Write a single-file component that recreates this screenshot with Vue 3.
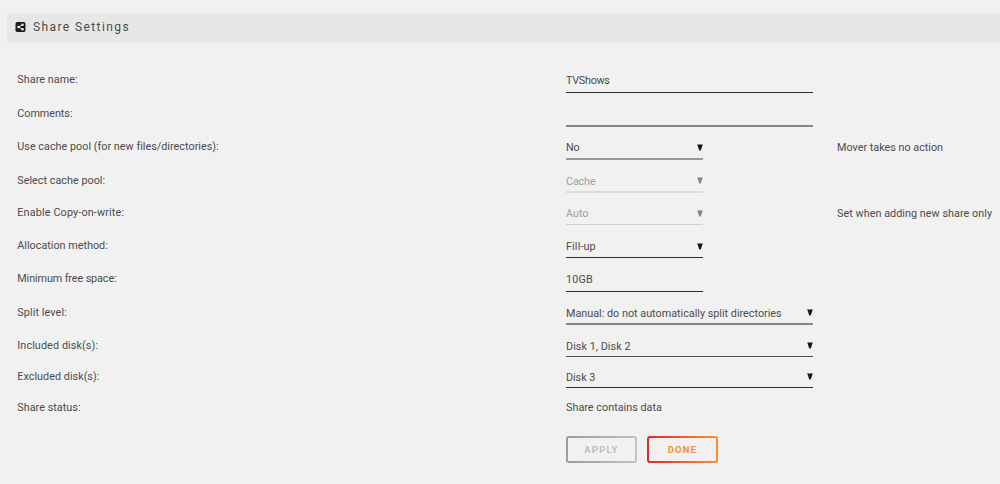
<script setup>
const rows = [
  { label: 'Share name:', ls: 0.05, height: 34, line: 30, kind: 'input', value: 'TVShows', vs: -0.28, wide: true },
  { label: 'Comments:', ls: -0.04, height: 34, line: 30, kind: 'input', value: '', wide: true, tone: 'mid' },
  { label: 'Use cache pool (for new files/directories):', ls: 0.02, height: 33, line: 29, kind: 'select', value: 'No', vs: -0.3, note: 'Mover takes no action', tone: 'soft', raised: true },
  { label: 'Select cache pool:', ls: 0.02, height: 33, line: 29, kind: 'select', value: 'Cache', vs: -0.15, tone: 'disabled blurred' },
  { label: 'Enable Copy-on-write:', ls: 0.15, height: 33, line: 28, kind: 'select', value: 'Auto', note: 'Set when adding new share only', ns: 0.04, tone: 'disabled', raised: true },
  { label: 'Allocation method:', height: 33, line: 28, kind: 'select', value: 'Fill-up', vs: 0.14, raised: true },
  { label: 'Minimum free space:', ls: -0.1, height: 33, line: 29, kind: 'input', value: '10GB', vs: 0.2, raised: true },
  { label: 'Split level:', ls: 0.1, height: 33, line: 29, kind: 'select', value: 'Manual: do not automatically split directories', wide: true, tone: 'mid' },
  { label: 'Included disk(s):', ls: 0.1, height: 31, line: 28, kind: 'select', value: 'Disk 1, Disk 2', vs: 0.05, wide: true, tone: 'dim' },
  { label: 'Excluded disk(s):', ls: 0.03, height: 31, line: 28, kind: 'select', value: 'Disk 3', vs: -0.05, wide: true },
  { label: 'Share status:', ls: 0.03, height: 31, line: 28, kind: 'text', value: 'Share contains data', vs: 0.02 },
]
const tracking = (n = 0) => ({ letterSpacing: n + 'px' })
</script>

<template>
  <main class="page">
    <header class="title">
      <svg class="share" viewBox="0 0 20 20" aria-hidden="true">
        <rect width="20" height="20" rx="3.5" fill="#1c1c1c" />
        <path d="M14 5.5 6 10l8 4.5" fill="none" stroke="#eee" stroke-width="1.8" />
        <circle cx="14" cy="5.7" r="2.5" fill="#eee" />
        <circle cx="6" cy="10" r="2.5" fill="#eee" />
        <circle cx="14" cy="14.3" r="2.5" fill="#eee" />
      </svg>
      <h1>Share Settings</h1>
    </header>
    <section class="form">
      <div v-for="row in rows" :key="row.label" class="row" :class="{ raised: row.raised }" :style="{ height: row.height + 'px' }">
        <span class="label" :style="tracking(row.ls)">{{ row.label }}</span>
        <div class="field" :class="[row.kind, row.tone, { wide: row.wide }]" :style="{ height: row.line + 'px' }">
          <span :style="tracking(row.vs)">{{ row.value }}</span>
          <svg v-if="row.kind === 'select'" class="arrow" viewBox="0 0 6 7"><path d="M0.2 0.5h5.6L3.7 6.5H2.3z" /></svg>
        </div>
        <span class="note" :style="tracking(row.ns)">{{ row.note }}</span>
      </div>
    </section>
    <footer class="actions">
      <button class="apply" disabled>APPLY</button>
      <button class="done">DONE</button>
    </footer>
  </main>
</template>

<style>
body { background: #f1f1f1; }
</style>

<style scoped>
.page {
  box-sizing: border-box;
  width: 1000px;
  height: 484px;
  padding-top: 13px;
  overflow: hidden;
  background: #f1f1f1;
  color: #4b4b4b;
  font: 10.8px/16px Roboto, "Liberation Sans", sans-serif;
}
.title {
  display: flex;
  align-items: center;
  box-sizing: border-box;
  height: 30px;
  margin-left: 7px;
  padding: 0 0 2px 8px;
  background: #e7e7e7;
}
.share { width: 11px; height: 10px; margin-right: 7px; }
h1 { margin: 0; font-size: 12px; font-weight: 400; letter-spacing: 1.4px; }
.form { padding: 20px 0 0 17px; }
.row { display: grid; grid-template-columns: 549px 271px 1fr; align-items: start; }
.label { padding: 9px 0 0 0.3px; }
.note { padding-top: 10px; white-space: nowrap; }
.field {
  display: flex;
  justify-content: space-between;
  box-sizing: border-box;
  width: 137px;
  padding-top: 10px;
  border-bottom: 1px solid #2c2c2c;
  white-space: nowrap;
}
.raised .label { padding-top: 8px; }
.raised .field, .raised .note { padding-top: 9px; }
.field.wide { width: 247px; }
.field.mid { border-bottom: 2px solid #858585; }
.field.soft { border-bottom: 2px solid #989898; }
.field.dim { border-color: #505050; }
.field.disabled { border-color: #cfcfcf; color: #a0a0a0; }
.field.blurred { border-bottom: 2px solid #dcdcdc; }
.field.text { border: 0; padding-top: 9px; }
.arrow { width: 6px; height: 7px; margin: 3px 0 0; fill: #161616; }
.raised .arrow { margin-top: 4px; }
.disabled .arrow { fill: #858585; }
.actions { display: flex; gap: 10px; padding: 14px 0 0 566px; }
button {
  width: 71px;
  height: 27px;
  padding: 0;
  border: 2px solid transparent;
  border-radius: 3px;
  font: 700 9.5px/20px Roboto, "Liberation Sans", sans-serif;
  letter-spacing: 1.2px;
}
.apply {
  background: linear-gradient(#f1f1f1, #f1f1f1) padding-box, linear-gradient(90deg, #9b9b9b, #c3c3c3) border-box;
  color: #bebebe;
}
.done {
  background: linear-gradient(#f1f1f1, #f1f1f1) padding-box, linear-gradient(90deg, #e22828, #ff8c2f) border-box;
  color: #f98e32;
}
</style>
